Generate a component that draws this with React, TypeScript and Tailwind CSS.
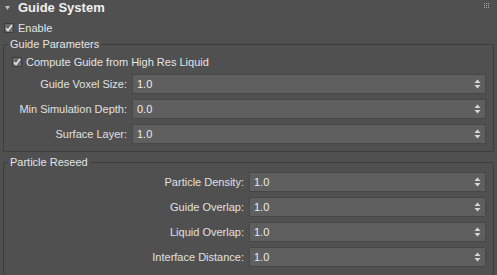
const font = { fontFamily: '"Liberation Sans", Arial, sans-serif' };

const Check = ({ label }: { label: string }) => (
  <div className="flex items-center gap-[4px] h-[12px]">
    <div className="w-[10px] h-[10px] bg-[#6a6a6a] border border-[#3e3e3e] flex items-center justify-center">
      <svg width="8" height="8" viewBox="0 0 8 8">
        <path d="M1 4.2 L3 6.5 L7 1" stroke="#ececec" strokeWidth="1.5" fill="none" />
      </svg>
    </div>
    <span className="text-[11px] text-[#e4e4e4] leading-none">{label}</span>
  </div>
);

const Spinner = () => (
  <svg width="7" height="10" viewBox="0 0 7 10" className="shrink-0">
    <path d="M3.5 0.5 L6.5 4 L0.5 4 Z" fill="#d8d8d8" />
    <path d="M3.5 9.5 L6.5 6 L0.5 6 Z" fill="#d8d8d8" />
  </svg>
);

const Field = ({ label, value, labelW }: { label: string; value: string; labelW: string }) => (
  <div className="flex items-center h-[20px]">
    <div className={`${labelW} shrink-0 text-right pr-[5px] text-[11px] text-[#e0e0e0]`}>{label}</div>
    <div className="flex-1 h-[20px] bg-[#5f5f5f] border border-[#474747] flex items-center justify-between pl-[4px] pr-[4px]">
      <span className="text-[11px] text-[#ececec]">{value}</span>
      <Spinner />
    </div>
  </div>
);

const Group = ({ title, children, className }: { title: string; children: React.ReactNode; className: string }) => (
  <div className={`relative mx-[3px] border border-[#3c3c3c] rounded-[2px] ${className}`}>
    <div className="absolute left-[4px] top-[-8px] px-[2px] bg-[#505050] text-[11px] text-[#e4e4e4] leading-[14px]">
      {title}
    </div>
    {children}
  </div>
);

export default function App() {
  return (
    <div className="w-[497px] h-[275px] bg-[#505050] overflow-hidden relative" style={font}>
      <div className="flex items-center h-[15px] pl-[5px] pt-[1px]">
        <svg width="5" height="4" viewBox="0 0 5 4" className="mr-[8px]">
          <path d="M0 0 L5 0 L2.5 4 Z" fill="#bdbdbd" />
        </svg>
        <span className="text-[13px] font-bold text-[#f0f0f0]">Guide System</span>
      </div>
      <div className="absolute right-[8px] top-[3px] grid grid-cols-3 gap-[1px]">
        {Array.from({ length: 9 }).map((_, i) => (
          <div key={i} className="w-[1px] h-[1px] bg-[#a8a8a8]" />
        ))}
      </div>
      <div className="pl-[4px] mt-[7px]">
        <Check label="Enable" />
      </div>
      <Group title="Guide Parameters" className="mt-[10px] h-[108px] pt-[11px]">
        <div className="pl-[8px]">
          <Check label="Compute Guide from High Res Liquid" />
        </div>
        <div className="flex flex-col gap-[5px] mt-[6px] pr-[7px]">
          <Field label="Guide Voxel Size:" value="1.0" labelW="w-[128px]" />
          <Field label="Min Simulation Depth:" value="0.0" labelW="w-[128px]" />
          <Field label="Surface Layer:" value="1.0" labelW="w-[128px]" />
        </div>
      </Group>
      <Group title="Particle Reseed" className="mt-[10px] h-[120px] pt-[9px]">
        <div className="flex flex-col gap-[5px] pr-[7px]">
          <Field label="Particle Density:" value="1.0" labelW="w-[245px]" />
          <Field label="Guide Overlap:" value="1.0" labelW="w-[245px]" />
          <Field label="Liquid Overlap:" value="1.0" labelW="w-[245px]" />
          <Field label="Interface Distance:" value="1.0" labelW="w-[245px]" />
        </div>
      </Group>
    </div>
  );
}
